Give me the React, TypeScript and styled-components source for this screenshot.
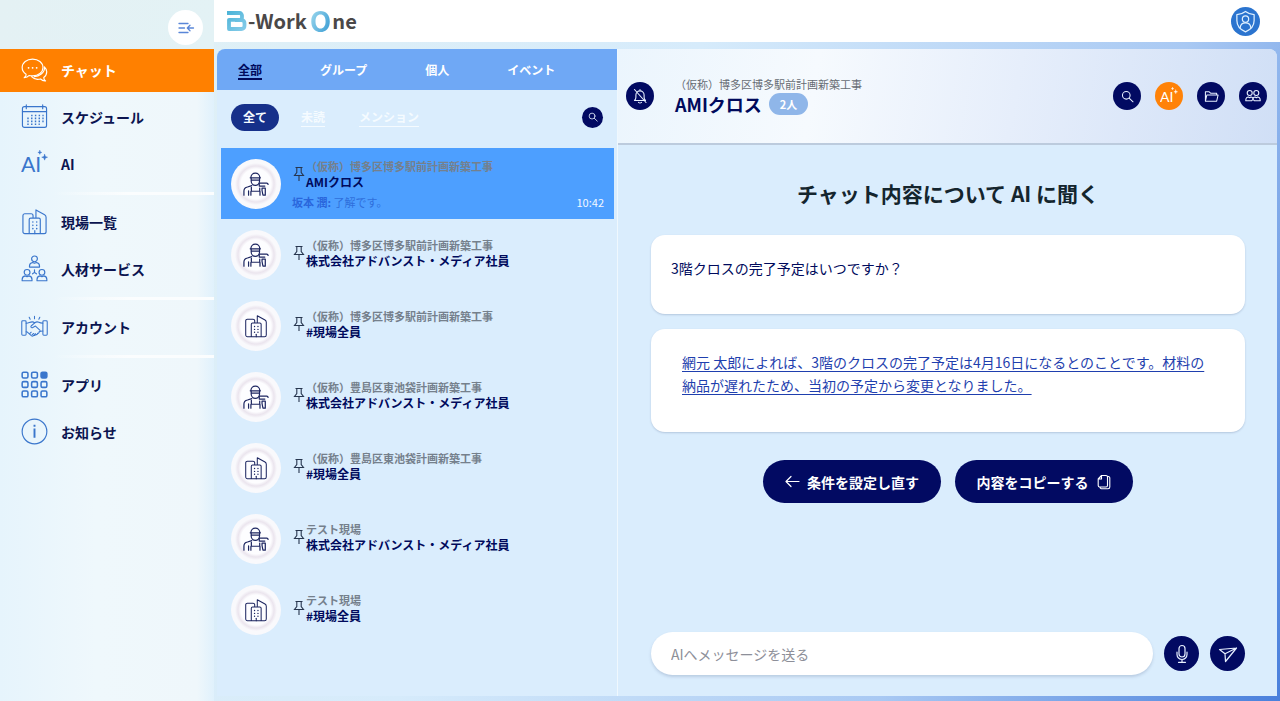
import React from "react";
import styled, { createGlobalStyle, css } from "styled-components";

const GlobalStyle = createGlobalStyle`
  *, *::before, *::after { box-sizing: border-box; }
  body {
    margin: 0;
    font-family: "Noto Sans CJK JP", "Noto Sans", sans-serif;
    color: #000a5c;
    font-size: 14px;
    line-height: 20px;
  }
  button, input { font: inherit; color: inherit; }
  button { border: 0; padding: 0; background: none; cursor: pointer; }
  a { color: inherit; text-decoration: none; }
  h1, h2, p, ul { margin: 0; padding: 0; }
  ul { list-style: none; }
  svg { display: block; flex: none; }
`;

/* ---------- Page frame ---------- */

const Page = styled.div`
  display: flex;
  min-height: 100vh;
  background: linear-gradient(115deg, #e3f2f4 0%, #d6ebfb 45%, #a9c9f3 75%, #4a80dc 100%);
`;

const Sidebar = styled.nav`
  display: flex;
  flex-direction: column;
  flex: none;
  width: 214px;
  background: linear-gradient(90deg, #e6f4fc 0%, #eff8fc 45%, #eff7fb 92%, #e0f1fc 100%);
`;

const SidebarTop = styled.div`
  display: flex;
  justify-content: flex-end;
  align-items: flex-end;
  height: 49px;
  padding: 0 11px 4px 0;
  background: linear-gradient(100deg, #e4f1f4, #e3f2f5);
`;

const CollapseButton = styled.button`
  display: grid;
  place-items: center;
  width: 35px;
  height: 35px;
  border-radius: 50%;
  background: #fff;
  color: #5a86d8;
`;

const NavGroup = styled.ul`
  display: flex;
  flex-direction: column;
  gap: 4px;
`;

const NavDivider = styled.hr`
  width: 100%;
  height: 3px;
  margin: 6px 0;
  border: 0;
  background: linear-gradient(90deg, transparent 25%, #fbfdfe 60%);
`;

const NavLink = styled.a<{ $active?: boolean }>`
  display: flex;
  align-items: center;
  gap: 13px;
  height: 43px;
  padding: 0 0 2px 21px;
  font-weight: 700;
  color: ${(p) => (p.$active ? "#fff" : "#0b1450")};
  background: ${(p) => (p.$active ? "#ff8000" : "transparent")};
  svg { color: ${(p) => (p.$active ? "#fff" : "#3a76cc")}; }
`;

const Main = styled.div`
  display: flex;
  flex-direction: column;
  flex: 1;
  min-width: 0;
`;

const TopBar = styled.header`
  display: flex;
  align-items: center;
  justify-content: space-between;
  height: 42px;
  padding: 0 20px 0 12px;
  background: #fff;
`;

const Logo = styled.a`
  display: flex;
  align-items: center;
  font-size: 20px;
  line-height: 28px;
  font-weight: 700;
  color: #4a4848;
`;

const LogoO = styled.span`
  margin: 0 1px 2px 3px;
  font-size: 28px;
  background: linear-gradient(115deg, #8fd0ea 20%, #4aa6d8 80%);
  -webkit-background-clip: text;
  background-clip: text;
  color: transparent;
`;

const ProfileButton = styled.button`
  display: grid;
  place-items: center;
  width: 29px;
  height: 29px;
  border-radius: 50%;
  background: #2b74cf;
  color: #dff0ff;
`;

const Workspace = styled.main`
  display: flex;
  flex: 1;
  margin: 7px 3px 5px;
  border-radius: 8px 8px 0 0;
  overflow: hidden;
  background: #daedfd;
`;

/* ---------- Conversation list ---------- */

const ListPane = styled.section`
  flex: none;
  width: 401px;
  border-right: 1px solid #eff8fe;
`;

const Tabs = styled.div`
  display: flex;
  align-items: center;
  gap: 58px;
  height: 41px;
  padding-left: 21px;
  background: #6fa8f5;
`;

const Tab = styled.button<{ $active?: boolean }>`
  padding-top: 2px;
  font-size: 12px;
  line-height: 17px;
  font-weight: 700;
  color: ${(p) => (p.$active ? "#000a5c" : "#fff")};
  border-bottom: 2px solid ${(p) => (p.$active ? "#000a5c" : "transparent")};
`;

const Filters = styled.div`
  display: flex;
  align-items: center;
  gap: 10px;
  height: 58px;
  padding: 0 14px 4px;
`;

const FilterPill = styled.button<{ $active?: boolean }>`
  height: 27px;
  padding: 0 12px;
  border-radius: 14px;
  font-size: 12px;
  font-weight: 700;
  color: #f5fbff;
  ${(p) =>
    p.$active
      ? css`
          background: #16308a;
        `
      : css`
          text-decoration: underline;
          text-decoration-thickness: 1px;
          text-underline-offset: 4px;
        `}
`;

const RoundButton = styled.button<{ $size: number; $tone?: "accent" }>`
  display: grid;
  place-items: center;
  flex: none;
  width: ${(p) => p.$size}px;
  height: ${(p) => p.$size}px;
  border-radius: 50%;
  color: ${(p) => (p.$tone === "accent" ? "#fff" : "#e8f0ff")};
  background: ${(p) => (p.$tone === "accent" ? "#ff8208" : "#020a62")};
`;

const Spacer = styled.span`
  flex: 1;
`;

const Rooms = styled.ul`
  padding: 0 3px 0 4px;
`;

const RoomRow = styled.li<{ $selected?: boolean }>`
  height: 71px;
  background: ${(p) => (p.$selected ? "#4d9fff" : "transparent")};
`;

const RoomLink = styled.a`
  display: flex;
  align-items: center;
  height: 100%;
  padding: 0 10px;
`;

const Avatar = styled.span`
  display: grid;
  place-items: center;
  flex: none;
  width: 50px;
  height: 50px;
  margin-right: 11px;
  border-radius: 50%;
  background: radial-gradient(circle closest-side, #fdfdff 60%, #ebe5ee 72%, #f9f9fc 84%);
  color: #1c2560;
`;

const RoomBody = styled.div<{ $compact: boolean }>`
  flex: 1;
  min-width: 0;
  padding-bottom: ${(p) => (p.$compact ? 4 : 0)}px;
`;

const RoomHead = styled.div`
  display: flex;
  align-items: center;
  gap: 1px;
  padding-left: 1px;
  color: #27364f;
`;

const SiteName = styled.p<{ $strong?: boolean }>`
  font-size: 11px;
  line-height: 16px;
  font-weight: ${(p) => (p.$strong ? 700 : 400)};
  color: ${(p) => (p.$strong ? "#75808c" : "#666c74")};
`;

const RoomName = styled.p`
  font-size: 12px;
  line-height: 16px;
  font-weight: 700;
  color: #000a5c;
`;

const LastMessage = styled.p`
  display: flex;
  justify-content: space-between;
  margin-top: 4px;
  font-size: 11px;
  line-height: 16px;
  color: #2f6fdc;
  b { font-weight: 700; color: #2a66dc; }
  time { color: #f2f8ff; }
`;

/* ---------- Chat pane ---------- */

const ChatPane = styled.section`
  display: flex;
  flex-direction: column;
  flex: 1;
  min-width: 0;
`;

const ChatHeader = styled.div`
  display: flex;
  align-items: center;
  gap: 14px;
  height: 96px;
  padding: 0 10px 0 8px;
  border-bottom: 2px solid #bccbdd;
  background: linear-gradient(100deg, #ebf5fd 0%, #f6fafe 30%, #e6eefb 60%, #d0dff6 100%);
`;

const ChatHeading = styled.div`
  flex: 1;
  padding-left: 7px;
`;

const ChatTitleRow = styled.div`
  display: flex;
  align-items: center;
  gap: 7px;
`;

const ChatTitle = styled.h1`
  font-size: 18px;
  line-height: 24px;
  font-weight: 700;
  color: #000a5c;
`;

const MemberCount = styled.span`
  padding: 0 11px;
  border-radius: 11px;
  font-size: 11px;
  line-height: 22px;
  font-weight: 700;
  color: #fff;
  background: #8fb6e9;
`;

const ChatBody = styled.div`
  display: flex;
  flex-direction: column;
  flex: 1;
  padding: 33px 32px 21px 33px;
`;

const Question = styled.h2`
  margin-bottom: 27px;
  font-size: 21px;
  line-height: 30px;
  font-weight: 700;
  text-align: center;
  color: #14252e;
`;

const Card = styled.div<{ $answer?: boolean }>`
  min-height: ${(p) => (p.$answer ? 103 : 79)}px;
  margin-bottom: ${(p) => (p.$answer ? 28 : 15)}px;
  padding: ${(p) => (p.$answer ? "22px 31px" : "22px 20px")};
  border-radius: 14px;
  line-height: 23px;
  background: #fff;
  box-shadow: 0 1px 2px rgba(90, 110, 150, 0.3);
`;

const SourceLink = styled.a`
  color: #1f3fae;
  text-decoration: underline;
  text-underline-offset: 3px;
`;

const Actions = styled.div`
  display: flex;
  justify-content: center;
  gap: 14px;
`;

const ActionButton = styled.button`
  display: flex;
  align-items: center;
  justify-content: center;
  gap: 7px;
  width: 178px;
  height: 43px;
  border-radius: 22px;
  font-weight: 700;
  color: #fff;
  background: #020a62;
`;

const Composer = styled.form`
  display: flex;
  align-items: center;
  gap: 11px;
  margin-top: auto;
`;

const MessageInput = styled.input`
  flex: 1;
  min-width: 0;
  height: 43px;
  padding: 0 20px;
  border: 0;
  border-radius: 22px;
  background: #fff;
  box-shadow: 0 2px 3px rgba(90, 110, 150, 0.25);
  &::placeholder { color: #8d8f99; opacity: 1; }
`;

/* ---------- Icons ---------- */

type IconProps = {
  size: number;
  box?: number;
  stroke?: number;
  children: React.ReactNode;
};

const Icon = ({ size, box = 28, stroke = 1.2, children }: IconProps) => (
  <svg
    width={size}
    height={size}
    viewBox={`0 0 ${box} ${box}`}
    fill="none"
    stroke="currentColor"
    strokeWidth={stroke}
    strokeLinecap="round"
    strokeLinejoin="round"
    aria-hidden="true"
  >
    {children}
  </svg>
);

const CollapseIcon = () => (
  <Icon size={18} box={18} stroke={1.3}>
    <path d="M2 4.5h9M2 9h5.5M2 13.5h9M16.5 9H10.5M13 6.3 10.3 9 13 11.7" />
  </Icon>
);

const ChatIcon = () => (
  <Icon size={27}>
    <path d="M3.300 22.500c1.700-1 2.200-2.500 2-3.600C2.700 17.300 1.200 14.800 1.200 12 1.200 7 6 3.200 12 3.200S22.800 7 22.800 12 18 20.600 12 20.600c-1.200 0-2.300-.1-3.400-.4-1.300 1.500-3.200 2.300-5.300 2.300Z" />
    <path d="M24.300 11.200c1.500 1.400 2.400 3.200 2.400 5.200 0 2.500-1.200 4.500-3.100 5.900 0 1.300.6 2.600 1.900 3.500-2 .2-4-.6-5.200-2-3.400.9-7.200 0-9.300-2.300M24.300 11.200c.4 2.700-.8 5.600-3.600 7.700-1.800 1.400-4 2.300-6.700 2.500" />
    <path strokeWidth="1.8" d="M7.800 12.200h.1M12 12.200h.1M16.200 12.200h.1" />
  </Icon>
);

const CalendarIcon = () => (
  <Icon size={27}>
    <rect x="1.5" y="3.8" width="25" height="21.5" rx="2" />
    <path d="M1.5 9h25M5.5 2v4M22.5 2v4" />
    <path strokeWidth="1.7" strokeDasharray="1.5 2.4" strokeLinecap="butt" d="M10.5 13h13M6.500 16h17M6.500 19h17M6.500 22h13" />
  </Icon>
);

const AiIcon = ({ size }: { size: number }) => (
  <Icon size={size}>
    <text x="0" y="23" fontSize="22" fontFamily="Lato, sans-serif" fontWeight="400" fill="currentColor" stroke="none">
      AI
    </text>
    <path fill="currentColor" strokeWidth=".5" d="m24.500 4.500.8 2.200 2.200.8-2.200.8-.8 2.200-.8-2.200-2.200-.8 2.200-.8ZM19.500.5l.5 1.500 1.500.5-1.500.5-.5 1.500-.5-1.500-1.500-.5 1.500-.5Z" />
  </Icon>
);

const BuildingIcon = ({ size }: { size: number }) => (
  <Icon size={size}>
    <path d="M8.500 26.500H4a2 2 0 0 1-2-2V8a2 2 0 0 1 2-2h6.500a2 2 0 0 1 2 2v1.500M15.500 9.500V2l9 5a3 3 0 0 1 1.500 2.500v15a2 2 0 0 1-2 2H8.500V12a1.500 1.500 0 0 1 1.500-1.500h8.500A1.500 1.500 0 0 1 20 12v14.500" />
    <path strokeWidth="1.6" strokeDasharray=".1 3.3" d="M12.300 14.500v8M16.300 14.500v8" />
    <path d="M14.300 23.500v3" />
  </Icon>
);

const PeopleIcon = () => (
  <Icon size={27}>
    <circle cx="14" cy="4" r="3" />
    <path d="M8.800 12.500v-1.200c0-1.900 1.500-3.200 3.200-3.500l2 .8 2-.8c1.700.3 3.200 1.600 3.200 3.500v1.200Z" />
    <circle cx="6.3" cy="18" r="3" />
    <path d="M1.200 26.700v-1.400c0-1.900 1.400-3.300 3.100-3.600l2 .8 2-.8c1.700.3 3.100 1.700 3.100 3.600v1.400Z" />
    <circle cx="21.7" cy="18" r="3" />
    <path d="M16.600 26.700v-1.400c0-1.900 1.400-3.300 3.100-3.600l2 .8 2-.8c1.700.3 3.100 1.700 3.100 3.600v1.400ZM14 15.500v2.500l-2 1.500M14 18l2 1.500" />
  </Icon>
);

const HandshakeIcon = () => (
  <Icon size={27} stroke={1.1}>
    <rect x=".8" y="8" width="4.5" height="15" rx="1" />
    <rect x="22.7" y="8" width="4.5" height="15" rx="1" />
    <path d="M5.300 10.500c2 .6 4.200-1.500 6.500-1.300 1 .1 1.700.5 2.400 1 1.300-1 3-1.200 4.300-.6 1.400.7 2.700 1 4.200.9M5.300 19.500c1 0 1.600.5 2.200 1.200l3.500 3c.8.6 1.800.3 2-.6.9.6 2 .2 2.200-.8 1 .4 2-.2 2-1.200 1 .2 1.900-.7 1.600-1.700 1.200-.7 2.500-.8 3.900-.8" />
    <path d="m14.200 10.200-3.700 3.300c-.8.8.2 2.200 1.300 1.700l3.200-1.700 4.800 4.500M9 21.500l1.600-1.600M11.500 22.800l1.600-1.600M14 22.500l1-1" />
    <path d="M14 3.500v2.500M8.500 4.500l1 2M19.500 4.500l-1 2" />
  </Icon>
);

const AppsIcon = () => (
  <Icon size={27} stroke={1.6}>
    {[1.2, 11, 20.8].map((y) =>
      [1.2, 11, 20.8].map((x) => (
        <rect
          key={`${x}-${y}`}
          x={x}
          y={y}
          width="6"
          height="6"
          rx="1.5"
          fill={x > 20 && y < 2 ? "currentColor" : "none"}
        />
      ))
    )}
  </Icon>
);

const InfoIcon = () => (
  <Icon size={27}>
    <circle cx="14" cy="14" r="12.8" />
    <path strokeWidth="2" strokeLinecap="butt" d="M14 11v9.500M14 7v2.200" />
  </Icon>
);

const SearchIcon = ({ size }: { size: number }) => (
  <Icon size={size} box={16} stroke={1.3}>
    <circle cx="6.5" cy="6.5" r="4.7" />
    <path d="m10 10 4.800 4.500" />
  </Icon>
);

const PinIcon = () => (
  <svg width="12" height="16" viewBox="0 0 12 16" fill="none" stroke="currentColor" strokeWidth="1.1" aria-hidden="true">
    <path d="M2.500 1.500h7M3.800 1.500v5L1.500 9.500h9L8.200 6.500v-5M6 9.500V15" />
  </svg>
);

const WorkerIcon = () => (
  <Icon size={26} stroke={1.3}>
    <path d="M8.500 7a4.800 4.800 0 0 1 9.600 0M7.800 7.300h11M8.800 7.500v3.300c0 2.500 2 4.700 4.500 4.700s4.500-2.200 4.500-4.700V7.500M9 9.800h8.600" />
    <path d="M1 26v-4.500c0-2.300 1.500-3.800 3.800-4.300l4.700-1.500M6 26v-4.500M9 17.500v4.300h9v-3.500M8.500 22v4M18.300 22v4" />
    <path d="M17.500 13H25.500a1.500 1.500 0 0 1 1.500 1.500M17.500 13v3.200h6M20.500 18.500h3.500v7.500h-2.500l-1-5Z" />
  </Icon>
);

const BellOffIcon = () => (
  <Icon size={16} box={16} stroke={1.1}>
    <path d="M2.500 12.500h11c-1-.9-1.400-2-1.400-3.200V7a4.100 4.100 0 0 0-8.200 0v2.300c0 1.200-.4 2.300-1.400 3.200ZM6.500 14.300c.8.7 2.200.7 3 0M8 2.900V1.500M2.500 1.500l11.500 13" />
  </Icon>
);

const FolderIcon = () => (
  <Icon size={15} box={16} stroke={1.1}>
    <path d="M1.500 13v-10h4l1.500 1.500H13.500v2M1.500 13 3 6.500h12L13.500 13Z" />
  </Icon>
);

const MembersIcon = () => (
  <Icon size={16} box={16} stroke={1.1}>
    <circle cx="4.7" cy="5" r="2.5" />
    <circle cx="11.3" cy="5" r="2.5" />
    <path d="M.8 12.800v-.5c0-2 1.200-3.300 2.700-3.300l1.200.7 1.200-.7c1.200 0 2.100 1 2.100 2.300 0-1.300.9-2.300 2.100-2.300l1.200.7 1.200-.7c1.500 0 2.700 1.300 2.700 3.300v.5H9.500L8 11.300l-1.500 1.500Z" />
  </Icon>
);

const ShieldUserIcon = () => (
  <Icon size={23} box={24} stroke={1.3}>
    <path d="M12 1.500C9.500 3.500 6.500 4.500 3 4.700V11c0 5.500 3.500 9.500 9 11.800 5.500-2.300 9-6.300 9-11.800V4.700c-3.500-.2-6.500-1.200-9-3.200Z" />
    <circle cx="12" cy="9.5" r="3.3" />
    <path d="M6.500 18.300c.3-3 2.500-4.800 5.500-4.800s5.200 1.800 5.500 4.800" />
  </Icon>
);

const BackArrowIcon = () => (
  <Icon size={15} box={15} stroke={1.2}>
    <path d="M14 7.500H1M6 2.500l-5 5 5 5" />
  </Icon>
);

const CopyIcon = () => (
  <Icon size={16} box={16} stroke={1.1}>
    <path d="M5.500 1.500h4.500a1.500 1.500 0 0 1 1.500 1.500v8.500a1.500 1.500 0 0 1-1.500 1.500H3.700a1.500 1.500 0 0 1-1.500-1.500V5ZM5.500 1.500V5H2.200M11.500 2.500h.8a1.500 1.500 0 0 1 1.500 1.500v9a1.700 1.700 0 0 1-1.700 1.700H5.500A1.500 1.500 0 0 1 4 13" />
  </Icon>
);

const MicIcon = () => (
  <Icon size={20} box={20} stroke={1.2}>
    <rect x="7" y="1.5" width="6" height="11.5" rx="3" />
    <path d="M5 8v2.500a5 5 0 0 0 10 0V8M10 15.500V18M6.500 18.300h7" />
  </Icon>
);

const SendIcon = () => (
  <Icon size={20} box={20} stroke={1.2}>
    <path d="M1.500 5.500 18.500 4 7.500 17.500 7 9.800ZM7 9.800 18.500 4" />
  </Icon>
);

const LogoMark = () => (
  <svg width="22" height="22" viewBox="0 0 22 22" fill="none" aria-hidden="true">
    <defs>
      <linearGradient id="mark" x1="0" y1="0" x2="1" y2="1">
        <stop offset="0" stopColor="#4cb4d8" />
        <stop offset="1" stopColor="#85cbe8" />
      </linearGradient>
    </defs>
    <path
      stroke="url(#mark)"
      strokeWidth="3.8"
      strokeLinejoin="round"
      d="M1 3h12.500a2.500 2.500 0 0 1 2.500 2.500v2a2.300 2.300 0 0 1-2.300 2.300H3V19h12.500a3 3 0 0 0 3-3v-3a3 3 0 0 0-3-3H9"
    />
  </svg>
);

/* ---------- Data ---------- */

const navGroups = [
  [
    { label: "チャット", icon: <ChatIcon />, active: true },
    { label: "スケジュール", icon: <CalendarIcon /> },
    { label: "AI", icon: <AiIcon size={27} /> },
  ],
  [
    { label: "現場一覧", icon: <BuildingIcon size={27} /> },
    { label: "人材サービス", icon: <PeopleIcon /> },
  ],
  [{ label: "アカウント", icon: <HandshakeIcon /> }],
  [
    { label: "アプリ", icon: <AppsIcon /> },
    { label: "お知らせ", icon: <InfoIcon /> },
  ],
] as { label: string; icon: React.ReactNode; active?: boolean }[][];

const HAKATA = "（仮称）博多区博多駅前計画新築工事";
const TOSHIMA = "（仮称）豊島区東池袋計画新築工事";
const STAFF = "株式会社アドバンスト・メディア社員";
const EVERYONE = "#現場全員";

type Room = { site: string; name: string; group?: boolean; last?: { from: string; text: string; time: string } };

const rooms: Room[] = [
  { site: HAKATA, name: "AMIクロス", last: { from: "坂本 潤:", text: "了解です。", time: "10:42" } },
  { site: HAKATA, name: STAFF },
  { site: HAKATA, name: EVERYONE, group: true },
  { site: TOSHIMA, name: STAFF },
  { site: TOSHIMA, name: EVERYONE, group: true },
  { site: "テスト現場", name: STAFF },
  { site: "テスト現場", name: EVERYONE, group: true },
];

/* ---------- App ---------- */

export default function App() {
  return (
    <>
      <GlobalStyle />
      <Page>
        <Sidebar aria-label="メインメニュー">
          <SidebarTop>
            <CollapseButton aria-label="メニューを閉じる">
              <CollapseIcon />
            </CollapseButton>
          </SidebarTop>
          {navGroups.map((group, i) => (
            <React.Fragment key={i}>
              {i > 0 && <NavDivider />}
              <NavGroup>
                {group.map((item) => (
                  <li key={item.label}>
                    <NavLink href="#" $active={item.active}>
                      {item.icon}
                      {item.label}
                    </NavLink>
                  </li>
                ))}
              </NavGroup>
            </React.Fragment>
          ))}
        </Sidebar>

        <Main>
          <TopBar>
            <Logo href="#">
              <LogoMark />
              <span>-Work</span>
              <LogoO>O</LogoO>
              <span>ne</span>
            </Logo>
            <ProfileButton aria-label="プロフィール">
              <ShieldUserIcon />
            </ProfileButton>
          </TopBar>

          <Workspace>
            <ListPane>
              <Tabs>
                <Tab $active>全部</Tab>
                <Tab>グループ</Tab>
                <Tab>個人</Tab>
                <Tab>イベント</Tab>
              </Tabs>
              <Filters>
                <FilterPill $active>全て</FilterPill>
                <FilterPill>未読</FilterPill>
                <FilterPill>メンション</FilterPill>
                <Spacer />
                <RoundButton $size={21} aria-label="検索">
                  <SearchIcon size={10} />
                </RoundButton>
              </Filters>
              <Rooms>
                {rooms.map((room, i) => (
                  <RoomRow key={i} $selected={i === 0}>
                    <RoomLink href="#">
                      <Avatar>{room.group ? <BuildingIcon size={24} /> : <WorkerIcon />}</Avatar>
                      <RoomBody $compact={!room.last}>
                        <RoomHead>
                          <PinIcon />
                          <div>
                            <SiteName $strong>{room.site}</SiteName>
                            <RoomName>{room.name}</RoomName>
                          </div>
                        </RoomHead>
                        {room.last && (
                          <LastMessage>
                            <span>
                              <b>{room.last.from}</b> {room.last.text}
                            </span>
                            <time>{room.last.time}</time>
                          </LastMessage>
                        )}
                      </RoomBody>
                    </RoomLink>
                  </RoomRow>
                ))}
              </Rooms>
            </ListPane>

            <ChatPane>
              <ChatHeader>
                <RoundButton $size={28} aria-label="通知オフ">
                  <BellOffIcon />
                </RoundButton>
                <ChatHeading>
                  <SiteName>{HAKATA}</SiteName>
                  <ChatTitleRow>
                    <ChatTitle>AMIクロス</ChatTitle>
                    <MemberCount>2人</MemberCount>
                  </ChatTitleRow>
                </ChatHeading>
                <RoundButton $size={28} aria-label="検索">
                  <SearchIcon size={13} />
                </RoundButton>
                <RoundButton $size={28} $tone="accent" aria-label="AIに聞く">
                  <AiIcon size={18} />
                </RoundButton>
                <RoundButton $size={28} aria-label="ファイル">
                  <FolderIcon />
                </RoundButton>
                <RoundButton $size={28} aria-label="メンバー">
                  <MembersIcon />
                </RoundButton>
              </ChatHeader>

              <ChatBody>
                <Question>チャット内容について AI に聞く</Question>
                <Card>
                  <p>3階クロスの完了予定はいつですか？</p>
                </Card>
                <Card $answer>
                  <SourceLink href="#">
                    網元 太郎によれば、3階のクロスの完了予定は4月16日になるとのことです。材料の納品が遅れたため、当初の予定から変更となりました。
                  </SourceLink>
                </Card>
                <Actions>
                  <ActionButton>
                    <BackArrowIcon />
                    条件を設定し直す
                  </ActionButton>
                  <ActionButton>
                    内容をコピーする
                    <CopyIcon />
                  </ActionButton>
                </Actions>
                <Composer onSubmit={(e) => e.preventDefault()}>
                  <MessageInput type="text" aria-label="メッセージ" placeholder="AIへメッセージを送る" />
                  <RoundButton $size={35} type="button" aria-label="音声入力">
                    <MicIcon />
                  </RoundButton>
                  <RoundButton $size={35} type="submit" aria-label="送信">
                    <SendIcon />
                  </RoundButton>
                </Composer>
              </ChatBody>
            </ChatPane>
          </Workspace>
        </Main>
      </Page>
    </>
  );
}
